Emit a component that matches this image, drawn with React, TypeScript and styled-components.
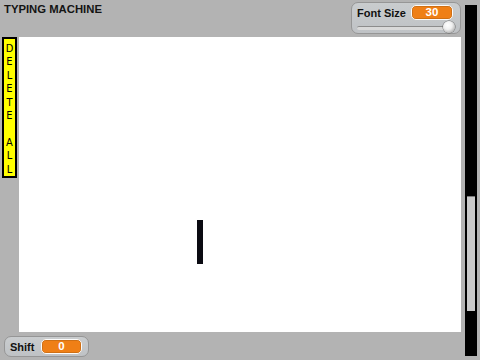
import React from "react";
import styled, { createGlobalStyle } from "styled-components";

const Global = createGlobalStyle`
  html, body { margin: 0; padding: 0; background: #b3b3b3; }
  body { font-family: "Liberation Sans", Arial, sans-serif; }
`;

const Stage = styled.div`
  width: 480px;
  height: 360px;
  background: #b3b3b3;
  display: grid;
  grid-template-columns: 19px 442px 4px 12px 3px;
  grid-template-rows: 37px 295px 28px;
  overflow: hidden;
`;

const Header = styled.div`
  grid-column: 1 / 3;
  grid-row: 1;
  display: flex;
  justify-content: space-between;
  align-items: flex-start;
`;

const Title = styled.div`
  font-family: "Liberation Sans", Arial, sans-serif;
  font-weight: bold;
  font-size: 11.3px;
  line-height: 13px;
  color: #141414;
  padding: 3px 0 0 4px;
`;

const Monitor = styled.div<{ $w: number; $h: number; $mt: number; $ml?: number }>`
  box-sizing: border-box;
  width: ${(p) => p.$w}px;
  height: ${(p) => p.$h}px;
  margin-top: ${(p) => p.$mt}px;
  margin-left: ${(p) => p.$ml ?? 0}px;
  border: 1px solid #969696;
  border-radius: 7px;
  background: linear-gradient(#c9ccce, #bfc2c5);
  display: flex;
  flex-direction: column;
  padding: 2px 0 0 5px;
`;

const MonitorRow = styled.div`
  display: flex;
  align-items: center;
  height: 15px;
`;

const Label = styled.span<{ $w: number }>`
  width: ${(p) => p.$w}px;
  font-weight: bold;
  font-size: 11px;
  color: #111;
  white-space: nowrap;
`;

const Value = styled.span<{ $w: number }>`
  box-sizing: border-box;
  width: ${(p) => p.$w}px;
  height: 15px;
  border-radius: 5px;
  background: #ef7f16;
  border: 1px solid #fbfbfb;
  box-shadow: 0 0 0 0.5px #b06010 inset;
  color: #fff;
  font-weight: bold;
  font-size: 11.5px;
  line-height: 13px;
  text-align: center;
`;

const SliderRow = styled.div`
  position: relative;
  height: 12px;
  margin-top: 2px;
  width: 96px;
`;

const Track = styled.div`
  position: absolute;
  left: 0;
  right: 2px;
  top: 4px;
  height: 3px;
  border-radius: 2px;
  background: #d9d9d9;
  border-top: 1px solid #8c8c8c;
`;

const Knob = styled.div`
  position: absolute;
  right: -2px;
  top: -1px;
  width: 12px;
  height: 12px;
  border-radius: 50%;
  background: radial-gradient(circle at 40% 35%, #ffffff 0%, #f0f0f0 40%, #8f8f8f 100%);
  box-shadow: 0 0 0 0.5px #666;
`;

const DeleteButton = styled.div`
  grid-column: 1;
  grid-row: 2;
  align-self: start;
  margin-left: 2px;
  box-sizing: border-box;
  width: 15px;
  height: 141px;
  background: #ffff00;
  border: 2px solid #000;
  display: flex;
  flex-direction: column;
  align-items: center;
  padding-top: 3px;
  font-family: "DejaVu Sans Condensed", "Liberation Sans", Arial, sans-serif;
  font-size: 11px;
  line-height: 13.4px;
  color: #000;
`;

const Canvas = styled.div`
  grid-column: 2;
  grid-row: 2;
  background: #fff;
  position: relative;
`;

const Cursor = styled.div`
  position: absolute;
  left: 178px;
  top: 183px;
  width: 6px;
  height: 44px;
  background: #0a0a12;
`;

const ScrollBar = styled.div`
  grid-column: 4;
  grid-row: 1 / 4;
  margin: 5px 0 4px 0;
  background: #000;
  display: flex;
  flex-direction: column;
`;

const Thumb = styled.div`
  margin: 191px 0 0 2px;
  width: 8px;
  height: 115px;
  background: #c9c9c9;
  border-top: 1px solid #7a7a7a;
  box-sizing: border-box;
`;

const Footer = styled.div`
  grid-column: 1 / 3;
  grid-row: 3;
  display: flex;
  align-items: flex-start;
`;

const letters = ["D", "E", "L", "E", "T", "E", "\u00a0", "A", "L", "L"];

export default function App() {
  return (
    <>
      <Global />
      <Stage>
        <Header>
          <Title>TYPING MACHINE</Title>
          <Monitor $w={110} $h={32} $mt={2}>
            <MonitorRow>
              <Label $w={54}>Font Size</Label>
              <Value $w={42}>30</Value>
            </MonitorRow>
            <SliderRow>
              <Track />
              <Knob />
            </SliderRow>
          </Monitor>
        </Header>
        <DeleteButton>
          {letters.map((l, i) => (
            <span key={i}>{l}</span>
          ))}
        </DeleteButton>
        <Canvas>
          <Cursor />
        </Canvas>
        <ScrollBar>
          <Thumb />
        </ScrollBar>
        <Footer>
          <Monitor $w={85} $h={21} $mt={4} $ml={4}>
            <MonitorRow>
              <Label $w={31}>Shift</Label>
              <Value $w={41}>0</Value>
            </MonitorRow>
          </Monitor>
        </Footer>
      </Stage>
    </>
  );
}
